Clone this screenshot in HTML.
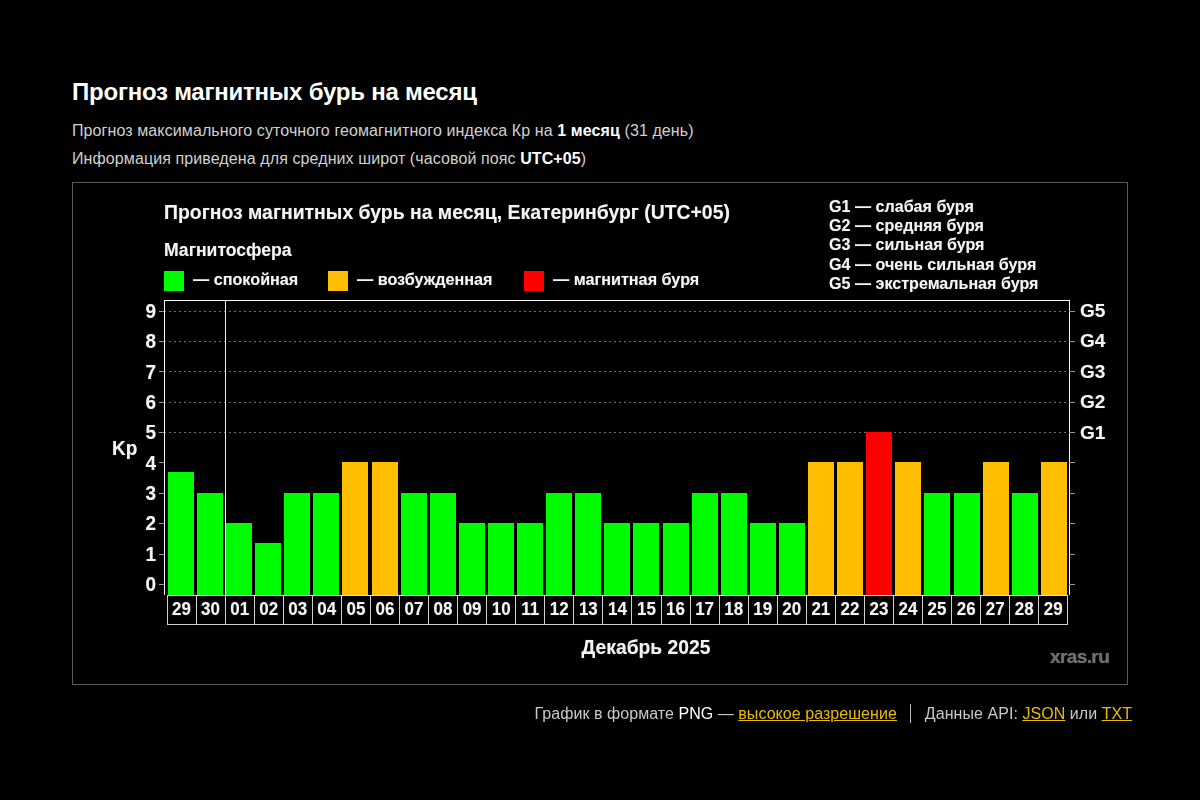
<!DOCTYPE html>
<html><head><meta charset="utf-8">
<style>
html,body{margin:0;padding:0;background:#000;}
body{width:1200px;height:800px;overflow:hidden;position:relative;font-family:"Liberation Sans",sans-serif;color:#d0d0d0;}
.a{position:absolute;white-space:nowrap;}
#h1{left:72px;top:78px;font-size:24px;font-weight:bold;color:#fff;letter-spacing:-0.23px;}
#p1{left:72px;top:122px;font-size:16px;letter-spacing:0.1px;}
#p2{left:72px;top:150px;font-size:16px;letter-spacing:0.1px;}
b{color:#fff;}
#chart{position:absolute;left:0;top:0;width:1200px;height:800px;will-change:transform;text-shadow:0 0 1px rgba(240,240,240,0.45);}
.ct{font-weight:bold;color:#f4f4f4;}
.bar{position:absolute;}
.yl{position:absolute;font-weight:bold;font-size:19px;transform:scaleY(1.07);color:#f4f4f4;text-align:right;width:40px;line-height:20px;}
.gl{position:absolute;font-weight:bold;font-size:19px;color:#f4f4f4;line-height:20px;}
.dl{position:absolute;font-weight:bold;font-size:17px;transform:scaleY(1.1);color:#f4f4f4;text-align:center;line-height:20px;}
.grid{position:absolute;height:1px;background:repeating-linear-gradient(90deg,#6c6c6c 0 2px,transparent 2px 5px);}
.tk{position:absolute;height:1px;background:#999;width:6px;}
</style></head><body>
<div class="a" id="h1">Прогноз магнитных бурь на месяц</div>
<div class="a" id="p1">Прогноз максимального суточного геомагнитного индекса Кр на <b>1 месяц</b> (31 день)</div>
<div class="a" id="p2">Информация приведена для средних широт (часовой пояс <b>UTC+05</b>)</div>
<div class="a" style="left:72px;top:182px;width:1054px;height:501px;border:1px solid #5a5a5a;"></div>
<div id="chart">

<div class="a ct" id="ctitle" style="left:164px;top:201px;font-size:19.4px;">Прогноз магнитных бурь на месяц, Екатеринбург (UTC+05)</div>
<div class="a ct" id="mag" style="left:164px;top:240px;font-size:17.6px;">Магнитосфера</div>
<div class="a" style="left:164px;top:271px;width:20px;height:20px;background:#00fc00;"></div>
<div class="a ct" style="left:193px;top:270px;font-size:16.2px;">— спокойная</div>
<div class="a" style="left:328px;top:271px;width:20px;height:20px;background:#ffbf00;"></div>
<div class="a ct" style="left:357px;top:270px;font-size:16.2px;">— возбужденная</div>
<div class="a" style="left:524px;top:271px;width:20px;height:20px;background:#ff0000;"></div>
<div class="a ct" style="left:553px;top:270px;font-size:16.2px;">— магнитная буря</div>
<div class="a ct" style="left:829px;top:196.8px;font-size:16.1px;">G1 — слабая буря</div>
<div class="a ct" style="left:829px;top:216.1px;font-size:16.1px;">G2 — средняя буря</div>
<div class="a ct" style="left:829px;top:235.4px;font-size:16.1px;">G3 — сильная буря</div>
<div class="a ct" style="left:829px;top:254.7px;font-size:16.1px;">G4 — очень сильная буря</div>
<div class="a ct" style="left:829px;top:274.0px;font-size:16.1px;">G5 — экстремальная буря</div>
<div class="grid" style="left:164px;top:432.1px;width:905px;"></div>
<div class="grid" style="left:164px;top:401.7px;width:905px;"></div>
<div class="grid" style="left:164px;top:371.3px;width:905px;"></div>
<div class="grid" style="left:164px;top:340.9px;width:905px;"></div>
<div class="grid" style="left:164px;top:310.5px;width:905px;"></div>
<div class="bar" style="left:167.80px;top:472.27px;width:26px;height:122.73px;background:#00fc00;"></div>
<div class="bar" style="left:196.90px;top:492.63px;width:26px;height:102.37px;background:#00fc00;"></div>
<div class="bar" style="left:226.00px;top:523.02px;width:26px;height:71.98px;background:#00fc00;"></div>
<div class="bar" style="left:255.10px;top:543.38px;width:26px;height:51.62px;background:#00fc00;"></div>
<div class="bar" style="left:284.20px;top:492.63px;width:26px;height:102.37px;background:#00fc00;"></div>
<div class="bar" style="left:313.30px;top:492.63px;width:26px;height:102.37px;background:#00fc00;"></div>
<div class="bar" style="left:342.40px;top:462.24px;width:26px;height:132.76px;background:#ffbf00;"></div>
<div class="bar" style="left:371.50px;top:462.24px;width:26px;height:132.76px;background:#ffbf00;"></div>
<div class="bar" style="left:400.60px;top:492.63px;width:26px;height:102.37px;background:#00fc00;"></div>
<div class="bar" style="left:429.70px;top:492.63px;width:26px;height:102.37px;background:#00fc00;"></div>
<div class="bar" style="left:458.80px;top:523.02px;width:26px;height:71.98px;background:#00fc00;"></div>
<div class="bar" style="left:487.90px;top:523.02px;width:26px;height:71.98px;background:#00fc00;"></div>
<div class="bar" style="left:517.00px;top:523.02px;width:26px;height:71.98px;background:#00fc00;"></div>
<div class="bar" style="left:546.10px;top:492.63px;width:26px;height:102.37px;background:#00fc00;"></div>
<div class="bar" style="left:575.20px;top:492.63px;width:26px;height:102.37px;background:#00fc00;"></div>
<div class="bar" style="left:604.30px;top:523.02px;width:26px;height:71.98px;background:#00fc00;"></div>
<div class="bar" style="left:633.40px;top:523.02px;width:26px;height:71.98px;background:#00fc00;"></div>
<div class="bar" style="left:662.50px;top:523.02px;width:26px;height:71.98px;background:#00fc00;"></div>
<div class="bar" style="left:691.60px;top:492.63px;width:26px;height:102.37px;background:#00fc00;"></div>
<div class="bar" style="left:720.70px;top:492.63px;width:26px;height:102.37px;background:#00fc00;"></div>
<div class="bar" style="left:749.80px;top:523.02px;width:26px;height:71.98px;background:#00fc00;"></div>
<div class="bar" style="left:778.90px;top:523.02px;width:26px;height:71.98px;background:#00fc00;"></div>
<div class="bar" style="left:808.00px;top:462.24px;width:26px;height:132.76px;background:#ffbf00;"></div>
<div class="bar" style="left:837.10px;top:462.24px;width:26px;height:132.76px;background:#ffbf00;"></div>
<div class="bar" style="left:866.20px;top:431.85px;width:26px;height:163.15px;background:#ff0000;"></div>
<div class="bar" style="left:895.30px;top:462.24px;width:26px;height:132.76px;background:#ffbf00;"></div>
<div class="bar" style="left:924.40px;top:492.63px;width:26px;height:102.37px;background:#00fc00;"></div>
<div class="bar" style="left:953.50px;top:492.63px;width:26px;height:102.37px;background:#00fc00;"></div>
<div class="bar" style="left:982.60px;top:462.24px;width:26px;height:132.76px;background:#ffbf00;"></div>
<div class="bar" style="left:1011.70px;top:492.63px;width:26px;height:102.37px;background:#00fc00;"></div>
<div class="bar" style="left:1040.80px;top:462.24px;width:26px;height:132.76px;background:#ffbf00;"></div>
<div class="a" style="left:164px;top:300px;width:904px;height:294px;border:1px solid #f8f8f8;border-bottom:none;"></div>
<div class="a" style="left:225px;top:300px;width:1px;height:295px;background:#f0f0f0;"></div>
<div class="tk" style="left:159px;top:584.0px;width:5px;"></div>
<div class="tk" style="left:1069px;top:584.0px;"></div>
<div class="yl" style="left:116px;top:575.2px;">0</div>
<div class="tk" style="left:159px;top:553.6px;width:5px;"></div>
<div class="tk" style="left:1069px;top:553.6px;"></div>
<div class="yl" style="left:116px;top:544.8px;">1</div>
<div class="tk" style="left:159px;top:523.2px;width:5px;"></div>
<div class="tk" style="left:1069px;top:523.2px;"></div>
<div class="yl" style="left:116px;top:514.4px;">2</div>
<div class="tk" style="left:159px;top:492.8px;width:5px;"></div>
<div class="tk" style="left:1069px;top:492.8px;"></div>
<div class="yl" style="left:116px;top:484.0px;">3</div>
<div class="tk" style="left:159px;top:462.4px;width:5px;"></div>
<div class="tk" style="left:1069px;top:462.4px;"></div>
<div class="yl" style="left:116px;top:453.6px;">4</div>
<div class="tk" style="left:159px;top:432.1px;width:5px;"></div>
<div class="tk" style="left:1069px;top:432.1px;"></div>
<div class="yl" style="left:116px;top:423.2px;">5</div>
<div class="tk" style="left:159px;top:401.7px;width:5px;"></div>
<div class="tk" style="left:1069px;top:401.7px;"></div>
<div class="yl" style="left:116px;top:392.9px;">6</div>
<div class="tk" style="left:159px;top:371.3px;width:5px;"></div>
<div class="tk" style="left:1069px;top:371.3px;"></div>
<div class="yl" style="left:116px;top:362.5px;">7</div>
<div class="tk" style="left:159px;top:340.9px;width:5px;"></div>
<div class="tk" style="left:1069px;top:340.9px;"></div>
<div class="yl" style="left:116px;top:332.1px;">8</div>
<div class="tk" style="left:159px;top:310.5px;width:5px;"></div>
<div class="tk" style="left:1069px;top:310.5px;"></div>
<div class="yl" style="left:116px;top:301.7px;">9</div>
<div class="gl" style="left:1080px;top:422.6px;">G1</div>
<div class="gl" style="left:1080px;top:392.2px;">G2</div>
<div class="gl" style="left:1080px;top:361.8px;">G3</div>
<div class="gl" style="left:1080px;top:331.4px;">G4</div>
<div class="gl" style="left:1080px;top:301.0px;">G5</div>
<div class="a ct" id="kp" style="left:112px;top:437px;font-size:19px;transform:scaleY(1.07);transform-origin:0 0;">Kp</div>
<div class="a" style="left:166.6px;top:595px;width:901.3px;height:30px;border:1px solid #d0d0d0;border-top:1px solid #e0e0e0;box-sizing:border-box;"></div>
<div class="a" style="left:195.56px;top:595px;width:1px;height:30px;background:#d0d0d0;"></div>
<div class="a" style="left:224.62px;top:595px;width:1px;height:30px;background:#d0d0d0;"></div>
<div class="a" style="left:253.68px;top:595px;width:1px;height:30px;background:#d0d0d0;"></div>
<div class="a" style="left:282.74px;top:595px;width:1px;height:30px;background:#d0d0d0;"></div>
<div class="a" style="left:311.80px;top:595px;width:1px;height:30px;background:#d0d0d0;"></div>
<div class="a" style="left:340.86px;top:595px;width:1px;height:30px;background:#d0d0d0;"></div>
<div class="a" style="left:369.92px;top:595px;width:1px;height:30px;background:#d0d0d0;"></div>
<div class="a" style="left:398.98px;top:595px;width:1px;height:30px;background:#d0d0d0;"></div>
<div class="a" style="left:428.04px;top:595px;width:1px;height:30px;background:#d0d0d0;"></div>
<div class="a" style="left:457.10px;top:595px;width:1px;height:30px;background:#d0d0d0;"></div>
<div class="a" style="left:486.16px;top:595px;width:1px;height:30px;background:#d0d0d0;"></div>
<div class="a" style="left:515.22px;top:595px;width:1px;height:30px;background:#d0d0d0;"></div>
<div class="a" style="left:544.28px;top:595px;width:1px;height:30px;background:#d0d0d0;"></div>
<div class="a" style="left:573.34px;top:595px;width:1px;height:30px;background:#d0d0d0;"></div>
<div class="a" style="left:602.40px;top:595px;width:1px;height:30px;background:#d0d0d0;"></div>
<div class="a" style="left:631.46px;top:595px;width:1px;height:30px;background:#d0d0d0;"></div>
<div class="a" style="left:660.52px;top:595px;width:1px;height:30px;background:#d0d0d0;"></div>
<div class="a" style="left:689.58px;top:595px;width:1px;height:30px;background:#d0d0d0;"></div>
<div class="a" style="left:718.64px;top:595px;width:1px;height:30px;background:#d0d0d0;"></div>
<div class="a" style="left:747.70px;top:595px;width:1px;height:30px;background:#d0d0d0;"></div>
<div class="a" style="left:776.76px;top:595px;width:1px;height:30px;background:#d0d0d0;"></div>
<div class="a" style="left:805.82px;top:595px;width:1px;height:30px;background:#d0d0d0;"></div>
<div class="a" style="left:834.88px;top:595px;width:1px;height:30px;background:#d0d0d0;"></div>
<div class="a" style="left:863.94px;top:595px;width:1px;height:30px;background:#d0d0d0;"></div>
<div class="a" style="left:893.00px;top:595px;width:1px;height:30px;background:#d0d0d0;"></div>
<div class="a" style="left:922.06px;top:595px;width:1px;height:30px;background:#d0d0d0;"></div>
<div class="a" style="left:951.12px;top:595px;width:1px;height:30px;background:#d0d0d0;"></div>
<div class="a" style="left:980.18px;top:595px;width:1px;height:30px;background:#d0d0d0;"></div>
<div class="a" style="left:1009.24px;top:595px;width:1px;height:30px;background:#d0d0d0;"></div>
<div class="a" style="left:1038.30px;top:595px;width:1px;height:30px;background:#d0d0d0;"></div>
<div class="dl" style="left:167.00px;top:599px;width:29.06px;">29</div>
<div class="dl" style="left:196.06px;top:599px;width:29.06px;">30</div>
<div class="dl" style="left:225.12px;top:599px;width:29.06px;">01</div>
<div class="dl" style="left:254.18px;top:599px;width:29.06px;">02</div>
<div class="dl" style="left:283.24px;top:599px;width:29.06px;">03</div>
<div class="dl" style="left:312.30px;top:599px;width:29.06px;">04</div>
<div class="dl" style="left:341.36px;top:599px;width:29.06px;">05</div>
<div class="dl" style="left:370.42px;top:599px;width:29.06px;">06</div>
<div class="dl" style="left:399.48px;top:599px;width:29.06px;">07</div>
<div class="dl" style="left:428.54px;top:599px;width:29.06px;">08</div>
<div class="dl" style="left:457.60px;top:599px;width:29.06px;">09</div>
<div class="dl" style="left:486.66px;top:599px;width:29.06px;">10</div>
<div class="dl" style="left:515.72px;top:599px;width:29.06px;">11</div>
<div class="dl" style="left:544.78px;top:599px;width:29.06px;">12</div>
<div class="dl" style="left:573.84px;top:599px;width:29.06px;">13</div>
<div class="dl" style="left:602.90px;top:599px;width:29.06px;">14</div>
<div class="dl" style="left:631.96px;top:599px;width:29.06px;">15</div>
<div class="dl" style="left:661.02px;top:599px;width:29.06px;">16</div>
<div class="dl" style="left:690.08px;top:599px;width:29.06px;">17</div>
<div class="dl" style="left:719.14px;top:599px;width:29.06px;">18</div>
<div class="dl" style="left:748.20px;top:599px;width:29.06px;">19</div>
<div class="dl" style="left:777.26px;top:599px;width:29.06px;">20</div>
<div class="dl" style="left:806.32px;top:599px;width:29.06px;">21</div>
<div class="dl" style="left:835.38px;top:599px;width:29.06px;">22</div>
<div class="dl" style="left:864.44px;top:599px;width:29.06px;">23</div>
<div class="dl" style="left:893.50px;top:599px;width:29.06px;">24</div>
<div class="dl" style="left:922.56px;top:599px;width:29.06px;">25</div>
<div class="dl" style="left:951.62px;top:599px;width:29.06px;">26</div>
<div class="dl" style="left:980.68px;top:599px;width:29.06px;">27</div>
<div class="dl" style="left:1009.74px;top:599px;width:29.06px;">28</div>
<div class="dl" style="left:1038.80px;top:599px;width:29.06px;">29</div>
<div class="a ct" id="dec" style="left:581.6px;top:637.2px;font-size:19.3px;">Декабрь 2025</div>
<div class="a" id="xras" style="left:1050px;top:646px;font-size:19px;font-weight:bold;color:#6e6e6e;letter-spacing:-0.6px;">xras.ru</div>
</div>
<div class="a" id="foot" style="right:68px;top:704px;font-size:16px;color:#c8c8c8;letter-spacing:0.05px;">График в формате <span style="color:#fff">PNG</span> — <u style="color:#e9bc00">высокое разрешение</u> <span style="display:inline-block;width:1px;height:19px;background:#bbb;vertical-align:-4px;margin:0 9px;"></span> Данные API: <u style="color:#e9bc00">JSON</u> или <u style="color:#e9bc00">TXT</u></div>
</body></html>
